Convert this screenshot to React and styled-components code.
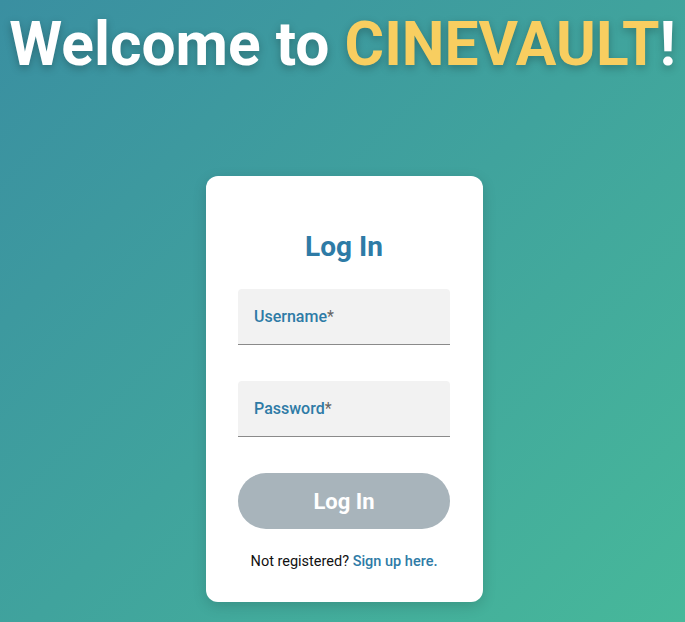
import React from 'react';
import styled, { createGlobalStyle } from 'styled-components';

const GlobalStyle = createGlobalStyle`
  html, body {
    margin: 0;
    padding: 0;
  }
  body {
    font-family: Roboto, "Liberation Sans", sans-serif;
  }
`;

const Page = styled.div`
  min-height: 622px;
  overflow: hidden;
  background: linear-gradient(135deg, #3a8fa1 0%, #40a39d 50%, #47b89a 100%);
  display: flex;
  flex-direction: column;
  align-items: center;
`;

const Title = styled.h1`
  margin: 10px 0 0;
  font-size: 60.5px;
  font-weight: 700;
  line-height: 70px;
  color: #fff;
  white-space: nowrap;
  text-shadow: 0 3px 8px rgba(0, 0, 0, 0.25);

  span {
    color: #f8ce60;
  }
`;

const Card = styled.form`
  margin: 96px 0 0 4px;
  width: 277px;
  box-sizing: border-box;
  padding: 54px 33px 32px 32px;
  background: #fff;
  border-radius: 12px;
  box-shadow: 0 4px 14px rgba(0, 0, 0, 0.15);
  display: flex;
  flex-direction: column;
`;

const Heading = styled.h2`
  margin: 0 0 25px;
  text-align: center;
  font-size: 28px;
  font-weight: 700;
  line-height: 34px;
  color: #2e7ba6;
`;

const Field = styled.label`
  display: flex;
  align-items: center;
  height: 55px;
  padding: 0 16px;
  margin-bottom: ${p => p.$gap || 0}px;
  background: #f2f2f2;
  border-radius: 4px 4px 0 0;
  border-bottom: 1px solid #8a8a8a;
  font-size: 16px;
  font-weight: 500;
  color: #2e7ba6;

  em {
    font-style: normal;
    font-weight: 400;
    color: #666;
  }
`;

const Button = styled.button`
  height: 56px;
  border: none;
  border-radius: 28px;
  background: #a8b4bb;
  color: #fff;
  font-family: inherit;
  font-size: 22px;
  font-weight: 700;
  margin-bottom: 24px;
`;

const Footer = styled.p`
  margin: 0;
  text-align: center;
  font-size: 14.5px;
  color: #111;

  a {
    color: #2e7ba6;
    font-weight: 500;
    text-decoration: none;
  }
`;

export default function App() {
  return (
    <Page>
      <GlobalStyle />
      <Title>
        Welcome to <span>CINEVAULT</span>!
      </Title>
      <Card onSubmit={e => e.preventDefault()}>
        <Heading>Log In</Heading>
        <Field $gap={36}>
          Username<em>*</em>
        </Field>
        <Field $gap={36}>
          Password<em>*</em>
        </Field>
        <Button type="button">Log In</Button>
        <Footer>
          Not registered? <a href="#">Sign up here.</a>
        </Footer>
      </Card>
    </Page>
  );
}
